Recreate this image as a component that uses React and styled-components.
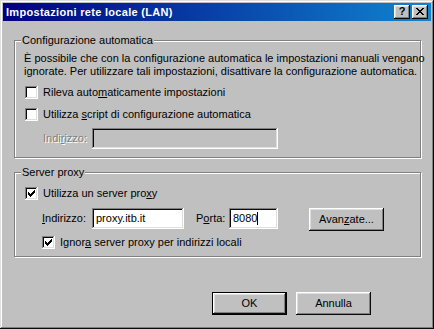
import React from "react";
import styled, { createGlobalStyle } from "styled-components";

const Global = createGlobalStyle`
  html, body { margin: 0; padding: 0; background: #c0c0c0; }
  * { box-sizing: border-box; }
`;

const Window = styled.div`
  width: 434px;
  height: 329px;
  background: #c0c0c0;
  padding: 3px;
  box-shadow: inset -1px -1px #0a0a0a, inset 1px 1px #dfdfdf,
    inset -2px -2px #808080, inset 2px 2px #ffffff;
  display: flex;
  flex-direction: column;
  font-family: "Liberation Sans", Arial, sans-serif;
  font-size: 11px;
  line-height: 13px;
  color: #000;
`;

const TitleBar = styled.div`
  flex: none;
  height: 18px;
  background: linear-gradient(90deg, #000080, #1084d0);
  display: flex;
  align-items: center;
  justify-content: space-between;
  padding: 0 3px;
`;

const Title = styled.span`
  color: #fff;
  font-weight: bold;
  letter-spacing: 0.3px;
  padding-top: 1px;
  white-space: nowrap;
`;

const TitleButtons = styled.div`
  display: flex;
  gap: 2px;
`;

const TitleButton = styled.div`
  width: 16px;
  height: 14px;
  background: #c0c0c0;
  box-shadow: inset -1px -1px #0a0a0a, inset 1px 1px #ffffff,
    inset -2px -2px #808080, inset 2px 2px #dfdfdf;
  display: flex;
  align-items: center;
  justify-content: center;
  font-weight: bold;
  font-size: 11px;
  line-height: 11px;
  padding-bottom: 1px;
`;

const Content = styled.div`
  flex: 1;
  display: flex;
  flex-direction: column;
  padding: 19px 10px 0 11px;
`;

const Group = styled.div`
  position: relative;
  flex: none;
  height: ${(p) => p.$h}px;
  margin-top: ${(p) => p.$mt || 0}px;
  border: 1px solid #808080;
  box-shadow: 1px 1px 0 #ffffff, inset 1px 1px 0 #ffffff;
  padding: ${(p) => p.$pt}px 0 0 10px;
  display: flex;
  flex-direction: column;
`;

const Legend = styled.span`
  position: absolute;
  top: -7px;
  left: 6px;
  padding: 0 1px;
  background: #c0c0c0;
  white-space: nowrap;
`;

const Paragraph = styled.p`
  margin: 0 0 0 -1px;
  white-space: nowrap;
`;

const CheckRow = styled.div`
  display: flex;
  align-items: center;
  gap: 5px;
  height: 13px;
  margin-top: ${(p) => p.$mt || 0}px;
  margin-left: ${(p) => p.$indent || 0}px;
  white-space: nowrap;
`;

const Box = styled.div`
  flex: none;
  width: 13px;
  height: 13px;
  background: #fff;
  box-shadow: inset -1px -1px #ffffff, inset 1px 1px #808080,
    inset -2px -2px #dfdfdf, inset 2px 2px #0a0a0a;
  display: flex;
  align-items: center;
  justify-content: center;
`;

const FieldRow = styled.div`
  display: flex;
  align-items: flex-start;
  margin-top: ${(p) => p.$mt || 0}px;
  margin-left: ${(p) => p.$indent || 0}px;
`;

const FieldLabel = styled.span`
  flex: none;
  width: ${(p) => p.$w}px;
  margin-left: ${(p) => p.$ml || 0}px;
  margin-top: 4px;
  white-space: nowrap;
  color: ${(p) => (p.$disabled ? "#808080" : "#000")};
  text-shadow: ${(p) => (p.$disabled ? "1px 1px 0 #ffffff" : "none")};
`;

const TextField = styled.div`
  flex: none;
  width: ${(p) => p.$w}px;
  height: 21px;
  background: ${(p) => (p.$disabled ? "#c0c0c0" : "#ffffff")};
  box-shadow: inset -1px -1px #ffffff, inset 1px 1px #808080,
    inset -2px -2px #dfdfdf, inset 2px 2px #0a0a0a;
  padding: 4px 3px 0 4px;
  white-space: nowrap;
  display: flex;
  align-items: flex-start;
`;

const Caret = styled.span`
  display: inline-block;
  width: 1px;
  height: 13px;
  background: #000;
`;

const Button = styled.button`
  flex: none;
  width: 75px;
  height: 23px;
  margin-left: ${(p) => p.$ml || 0}px;
  padding: 0;
  font: inherit;
  color: #000;
  background: #c0c0c0;
  border: ${(p) => (p.$default ? "1px solid #000" : "none")};
  box-shadow: inset -1px -1px #0a0a0a, inset 1px 1px #ffffff,
    inset -2px -2px #808080, inset 2px 2px #dfdfdf;
  white-space: nowrap;
`;

const ButtonRow = styled.div`
  display: flex;
  margin-top: 35px;
  padding-left: 198px;
`;

const Key = styled.span`
  text-decoration: underline;
`;

function Check() {
  return (
    <svg width="7" height="7" viewBox="0 0 7 7" shapeRendering="crispEdges">
      <path
        d="M6 0h1v3h-1zM5 1h1v3h-1zM4 2h1v3h-1zM3 3h1v3h-1zM2 4h1v3h-1zM1 3h1v3h-1zM0 2h1v3h-1z"
        fill="#000"
      />
    </svg>
  );
}

function CloseGlyph() {
  return (
    <svg width="8" height="7" viewBox="0 0 8 7" shapeRendering="crispEdges">
      <path
        d="M0 0h2v1h-2zM6 0h2v1h-2zM1 1h2v1h-2zM5 1h2v1h-2zM2 2h4v1h-4zM3 3h2v1h-2zM2 4h4v1h-4zM1 5h2v1h-2zM5 5h2v1h-2zM0 6h2v1h-2zM6 6h2v1h-2z"
        fill="#000"
      />
    </svg>
  );
}

function Checkbox({ checked }) {
  return <Box>{checked && <Check />}</Box>;
}

export default function App() {
  return (
    <>
      <Global />
      <Window>
        <TitleBar>
          <Title>Impostazioni rete locale (LAN)</Title>
          <TitleButtons>
            <TitleButton>?</TitleButton>
            <TitleButton>
              <CloseGlyph />
            </TitleButton>
          </TitleButtons>
        </TitleBar>
        <Content>
          <Group $h={118} $pt={11}>
            <Legend>Configurazione automatica</Legend>
            <Paragraph>
              È possibile che con la configurazione automatica le impostazioni manuali vengano
              <br />
              ignorate. Per utilizzare tali impostazioni, disattivare la configurazione automatica.
            </Paragraph>
            <CheckRow $mt={8}>
              <Checkbox />
              <span>
                Rileva auto<Key>m</Key>aticamente impostazioni
              </span>
            </CheckRow>
            <CheckRow $mt={9}>
              <Checkbox />
              <span>
                Utilizza <Key>s</Key>cript di configurazione automatica
              </span>
            </CheckRow>
            <FieldRow $mt={7} $indent={18}>
              <FieldLabel $w={49} $disabled>
                Indi<Key>r</Key>izzo:
              </FieldLabel>
              <TextField $w={186} $disabled />
            </FieldRow>
          </Group>
          <Group $h={85} $mt={14} $pt={14}>
            <Legend>Server proxy</Legend>
            <CheckRow>
              <Checkbox checked />
              <span>
                Utilizza un server pro<Key>x</Key>y
              </span>
            </CheckRow>
            <FieldRow $mt={8} $indent={17}>
              <FieldLabel $w={50}>
                <Key>I</Key>ndirizzo:
              </FieldLabel>
              <TextField $w={92}>proxy.itb.it</TextField>
              <FieldLabel $w={33} $ml={12}>
                P<Key>o</Key>rta:
              </FieldLabel>
              <TextField $w={49}>
                8080
                <Caret />
              </TextField>
              <Button $ml={31}>
                Avan<Key>z</Key>ate...
              </Button>
            </FieldRow>
            <CheckRow $mt={5} $indent={17}>
              <Checkbox checked />
              <span>
                Ignor<Key>a</Key> server proxy per indirizzi locali
              </span>
            </CheckRow>
          </Group>
          <ButtonRow>
            <Button $default>OK</Button>
            <Button $ml={9}>Annulla</Button>
          </ButtonRow>
        </Content>
      </Window>
    </>
  );
}
